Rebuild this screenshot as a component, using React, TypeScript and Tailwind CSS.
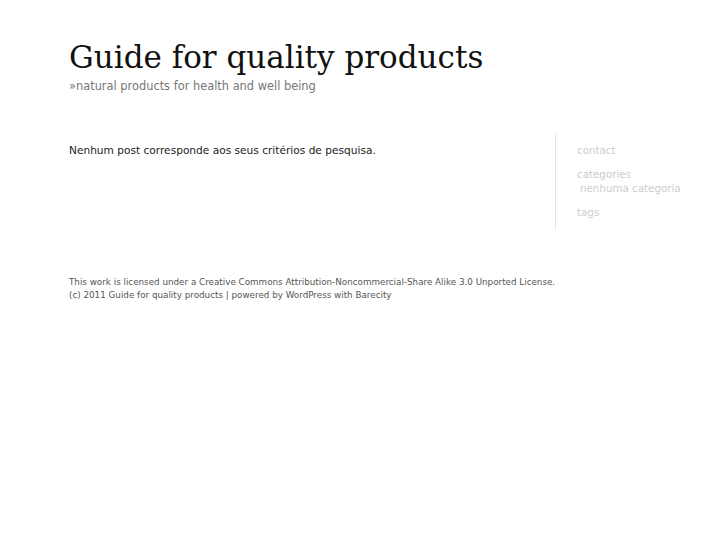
export default function App() {
  return (
    <div className="min-h-screen bg-white pl-[69px] pt-[38px] font-['DejaVu_Sans',sans-serif]">
      {/* Header */}
      <header>
        <h1 className="font-['DejaVu_Serif',serif] text-[31px] leading-[38px] text-[#111]">
          Guide for quality products
        </h1>
        <p className="mt-[2px] text-[11.4px] leading-[16px] text-[#777]">
          »natural products for health and well being
        </p>
      </header>

      {/* Content */}
      <div className="mt-[40px] flex">
        <div className="w-[486px] shrink-0 pt-[9px]">
          <p className="text-[10.6px] leading-[14px] text-[#222]">
            Nenhum post corresponde aos seus critérios de pesquisa.
          </p>
        </div>
        <aside className="shrink-0 whitespace-nowrap border-l border-dotted border-[#ccc] pl-[21px] pt-[9px] pb-[10px] text-[10.3px] leading-[14px] text-[#cccccc]">
          <div>contact</div>
          <div className="mt-[10px]">categories</div>
          <div className="pl-[3px]">nenhuma categoria</div>
          <div className="mt-[10px]">tags</div>
        </aside>
      </div>

      {/* Footer */}
      <footer className="mt-[47px] text-[8.77px] leading-[13px] text-[#555]">
        <p>
          This work is licensed under a Creative Commons Attribution-Noncommercial-Share Alike 3.0 Unported License.
        </p>
        <p>(c) 2011 Guide for quality products | powered by WordPress with Barecity</p>
      </footer>
    </div>
  );
}
